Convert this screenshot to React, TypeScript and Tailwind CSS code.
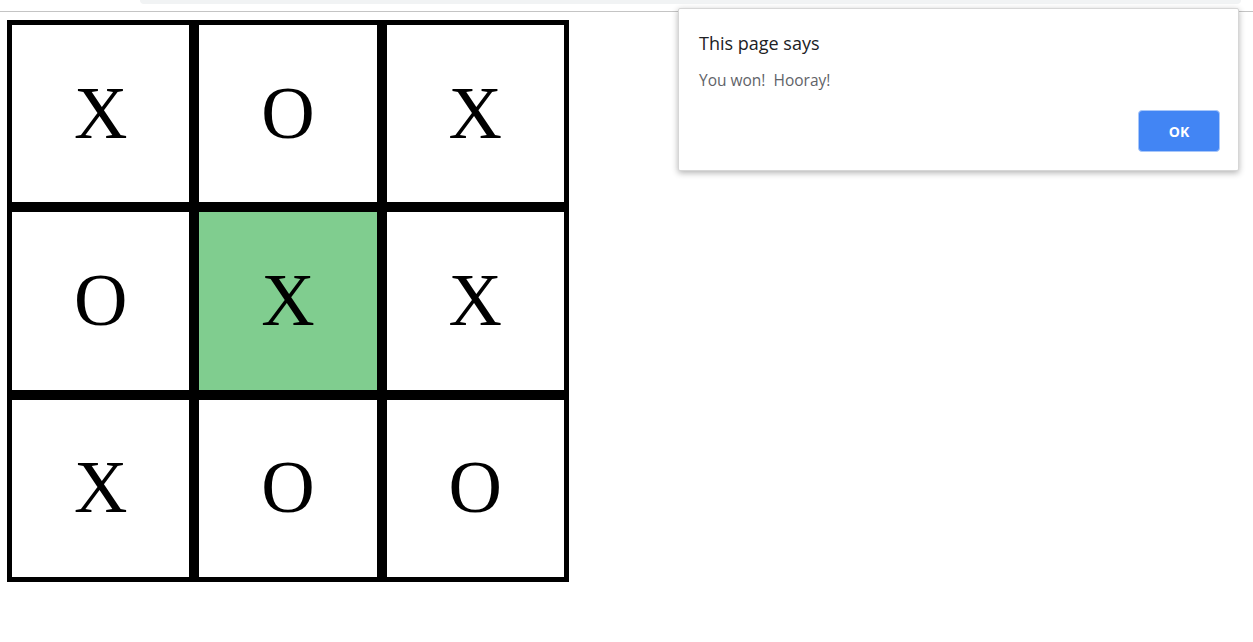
const board = ['X', 'O', 'X', 'O', 'X', 'X', 'X', 'O', 'O'];
const winning = [4];

export default function App() {
  return (
    <div className="relative h-[642px] w-full bg-white overflow-hidden">
      {/* browser chrome edge */}
      <div className="h-[12px] border-b border-[#c4c4c4]">
        <div className="ml-[140px] mr-[12px] h-[4px] rounded-b-[10px] bg-[#f1f3f4]" />
      </div>

      <div className="ml-[7px] mt-[8px] grid h-[562px] w-[562px] grid-cols-3 grid-rows-3">
        {board.map((mark, i) => (
          <div
            key={i}
            className={`flex items-center justify-center border-[5px] border-black ${
              winning.includes(i) ? 'bg-[#80cd8f]' : 'bg-white'
            }`}
          >
            <span
              className="mb-[2px] text-[74px] leading-none text-black"
              style={{ fontFamily: '"Liberation Serif", "Times New Roman", serif' }}
            >
              {mark}
            </span>
          </div>
        ))}
      </div>

      {/* alert dialog */}
      <div
        className="absolute left-[678px] top-[8px] h-[163px] w-[561px] rounded-[2px] border border-[#d6d6d6] bg-white shadow-[0_2px_6px_rgba(0,0,0,0.3)]"
        style={{ fontFamily: '"Open Sans", "Noto Sans", sans-serif' }}
      >
        <div className="px-5 pt-[22px]">
          <div className="text-[18px] leading-[24px] text-[#202124]">This page says</div>
          <div className="mt-[15px] text-[15.5px] leading-[20px] text-[#5f6368]">
            You won!&nbsp; Hooray!
          </div>
        </div>
        <div className="mt-[20px] flex justify-end pr-[18px]">
          <button className="h-[42px] w-[82px] rounded-[4px] border border-[#a8c7fa] bg-[#4285f4] text-[14px] font-bold text-white">
            OK
          </button>
        </div>
      </div>
    </div>
  );
}
